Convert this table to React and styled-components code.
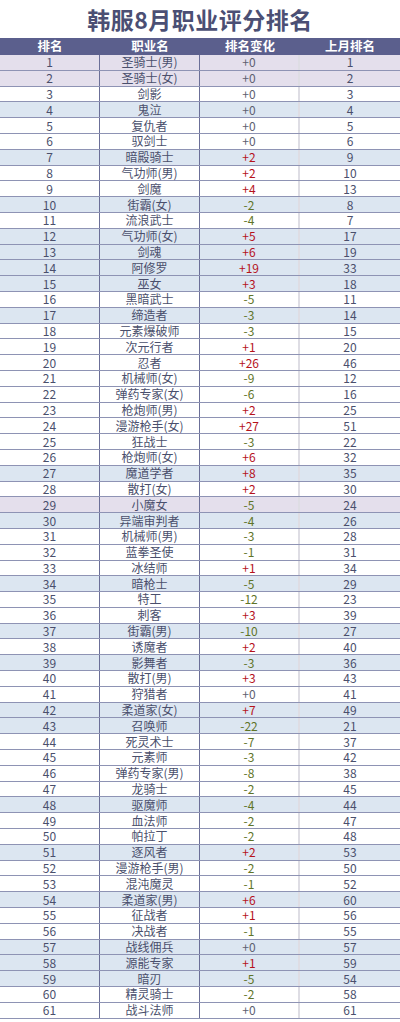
import React from "react";
import styled, { createGlobalStyle } from "styled-components";

const Global = createGlobalStyle`
  html, body { margin: 0; padding: 0; background: #fff; }
  body { font-family: "Noto Sans CJK SC", "Noto Sans", sans-serif; }
`;

const Page = styled.div`
  width: 400px;
  display: flex;
  flex-direction: column;
`;

const Title = styled.h1`
  margin: 0;
  height: 38px;
  display: flex;
  align-items: center;
  justify-content: center;
  font-size: 23px;
  font-weight: 700;
  color: #4b4f74;
  letter-spacing: 0.5px;
`;

const Table = styled.div`
  display: flex;
  flex-direction: column;
`;

const Row = styled.div`
  display: grid;
  grid-template-columns: 100px 100px 100px 100px;
  box-sizing: border-box;
  height: ${(p) => (p.$header ? "17px" : "15.8px")};
  background: ${(p) =>
    p.$header ? "#5b5f8d" : p.$tone === "p" ? "#e4dfec" : p.$tone === "b" ? "#dce6f1" : "#ffffff"};
  border-bottom: 1px solid ${(p) => (p.$header ? "#5b5f8d" : "#8e93b4")};
`;

const Cell = styled.div`
  display: flex;
  align-items: center;
  justify-content: center;
  box-sizing: border-box;
  font-size: ${(p) => (p.$header ? "12.5px" : "12px")};
  font-weight: ${(p) => (p.$header ? 700 : 400)};
  line-height: 1;
  color: ${(p) => (p.$header ? "#ffffff" : p.$color || "#4a4f6c")};
  border-right: ${(p) =>
    p.$line === "dark" ? "1px solid #6b6f98" : p.$line === "light" ? "2px solid #dedde4" : "none"};
  white-space: nowrap;
`;

const data = [
  [1, "圣骑士(男)", "+0", 1, "p"],
  [2, "圣骑士(女)", "+0", 2, "p"],
  [3, "剑影", "+0", 3],
  [4, "鬼泣", "+0", 4, "b"],
  [5, "复仇者", "+0", 5],
  [6, "驭剑士", "+0", 6],
  [7, "暗殿骑士", "+2", 9, "b"],
  [8, "气功师(男)", "+2", 10],
  [9, "剑魔", "+4", 13],
  [10, "街霸(女)", "-2", 8, "b"],
  [11, "流浪武士", "-4", 7],
  [12, "气功师(女)", "+5", 17, "b"],
  [13, "剑魂", "+6", 19, "b"],
  [14, "阿修罗", "+19", 33, "b"],
  [15, "巫女", "+3", 18, "b"],
  [16, "黑暗武士", "-5", 11],
  [17, "缔造者", "-3", 14, "b"],
  [18, "元素爆破师", "-3", 15],
  [19, "次元行者", "+1", 20],
  [20, "忍者", "+26", 46],
  [21, "机械师(女)", "-9", 12],
  [22, "弹药专家(女)", "-6", 16],
  [23, "枪炮师(男)", "+2", 25],
  [24, "漫游枪手(女)", "+27", 51],
  [25, "狂战士", "-3", 22],
  [26, "枪炮师(女)", "+6", 32],
  [27, "魔道学者", "+8", 35, "b"],
  [28, "散打(女)", "+2", 30],
  [29, "小魔女", "-5", 24, "p"],
  [30, "异端审判者", "-4", 26, "b"],
  [31, "机械师(男)", "-3", 28],
  [32, "蓝拳圣使", "-1", 31],
  [33, "冰结师", "+1", 34],
  [34, "暗枪士", "-5", 29, "b"],
  [35, "特工", "-12", 23],
  [36, "刺客", "+3", 39],
  [37, "街霸(男)", "-10", 27, "b"],
  [38, "诱魔者", "+2", 40],
  [39, "影舞者", "-3", 36, "b"],
  [40, "散打(男)", "+3", 43],
  [41, "狩猎者", "+0", 41],
  [42, "柔道家(女)", "+7", 49, "b"],
  [43, "召唤师", "-22", 21, "b"],
  [44, "死灵术士", "-7", 37],
  [45, "元素师", "-3", 42],
  [46, "弹药专家(男)", "-8", 38],
  [47, "龙骑士", "-2", 45],
  [48, "驱魔师", "-4", 44, "b"],
  [49, "血法师", "-2", 47],
  [50, "帕拉丁", "-2", 48],
  [51, "逐风者", "+2", 53, "b"],
  [52, "漫游枪手(男)", "-2", 50],
  [53, "混沌魔灵", "-1", 52],
  [54, "柔道家(男)", "+6", 60, "b"],
  [55, "征战者", "+1", 56],
  [56, "决战者", "-1", 55],
  [57, "战线佣兵", "+0", 57, "b"],
  [58, "源能专家", "+1", 59, "b"],
  [59, "暗刃", "-5", 54, "b"],
  [60, "精灵骑士", "-2", 58],
  [61, "战斗法师", "+0", 61],
];

const changeColor = (c) => {
  if (c === "+0") return "#5d6070";
  if (c.startsWith("+")) return "#b5121b";
  return "#5f7428";
};

export default function App() {
  return (
    <Page>
      <Global />
      <Title>韩服8月职业评分排名</Title>
      <Table>
        <Row $header>
          <Cell $header>排名</Cell>
          <Cell $header>职业名</Cell>
          <Cell $header>排名变化</Cell>
          <Cell $header>上月排名</Cell>
        </Row>
        {data.map(([rank, name, change, last, tone]) => (
          <Row key={rank} $tone={tone}>
            <Cell $line="dark">{rank}</Cell>
            <Cell $line="dark">{name}</Cell>
            <Cell $line="light" $color={changeColor(change)}>{change}</Cell>
            <Cell>{last}</Cell>
          </Row>
        ))}
      </Table>
    </Page>
  );
}
